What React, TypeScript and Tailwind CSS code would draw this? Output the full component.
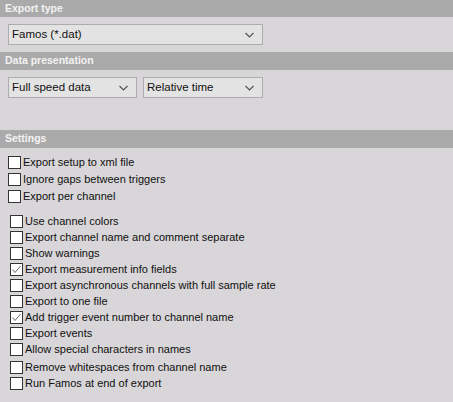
import React from "react";

const font = { fontFamily: '"Liberation Sans", Arial, sans-serif' };

function Header({ title, top }: { title: string; top?: boolean }) {
  return (
    <div
      className={`${top ? "h-[17px]" : "h-[18px]"} bg-[#aaaaaa] text-[#f2f2f2] font-bold text-[10.5px] pl-[5px] flex items-center`}
    >
      {title}
    </div>
  );
}

function Chevron() {
  return (
    <svg width="9" height="6" viewBox="0 0 9 6" className="shrink-0">
      <polyline points="0.5,1 4.5,5 8.5,1" fill="none" stroke="#505050" strokeWidth="1.1" />
    </svg>
  );
}

function Combo({ label, w }: { label: string; w: string }) {
  return (
    <div
      className={`${w} h-[21px] bg-[#e3e3e3] border border-[#adadad] flex items-center justify-between pl-[3px] pr-[8px] text-[11.5px] text-[#111]`}
    >
      <span>{label}</span>
      <Chevron />
    </div>
  );
}

function Check({ label, checked, h, extra }: { label: string; checked?: boolean; h: string; extra?: string }) {
  return (
    <div className={`${h} ${extra ?? ""} flex items-center gap-[2px] text-[11px] text-[#101010]`}>
      <div className="w-[13px] h-[13px] bg-white border border-[#333333] shrink-0 flex items-center justify-center">
        {checked && (
          <svg width="11" height="11" viewBox="0 0 11 11">
            <polyline points="1.5,5.5 4,8.5 9.5,2" fill="none" stroke="#6b6b6b" strokeWidth="1" />
          </svg>
        )}
      </div>
      <span className="leading-none">{label}</span>
    </div>
  );
}

export default function App() {
  const g2: [string, boolean?][] = [
    ["Use channel colors"],
    ["Export channel name and comment separate"],
    ["Show warnings"],
    ["Export measurement info fields", true],
    ["Export asynchronous channels with full sample rate"],
    ["Export to one file"],
    ["Add trigger event number to channel name", true],
    ["Export events"],
    ["Allow special characters in names"],
  ];
  return (
    <div className="w-[453px] h-[402px] bg-[#d8d6d8] overflow-hidden" style={font}>
      <Header title="Export type" top />
      <div className="pt-[7px] pb-[7px] pl-[8px]">
        <Combo label="Famos (*.dat)" w="w-[255px]" />
      </div>
      <Header title="Data presentation" />
      <div className="pt-[7px] pl-[8px] h-[60px] flex gap-[6px]">
        <Combo label="Full speed data" w="w-[129px]" />
        <Combo label="Relative time" w="w-[120px]" />
      </div>
      <Header title="Settings" />
      <div className="pt-[6px] pl-[8px]">
        <Check label="Export setup to xml file" h="h-[17px]" />
        <Check label="Ignore gaps between triggers" h="h-[17px]" />
        <Check label="Export per channel" h="h-[17px]" />
      </div>
      <div className="pt-[8px] pl-[10px]">
        {g2.map(([l, c]) => (
          <Check key={l} label={l} checked={c} h="h-[16px]" />
        ))}
        <Check label="Remove whitespaces from channel name" h="h-[16px]" extra="mt-[2px]" />
        <Check label="Run Famos at end of export" h="h-[16px]" />
      </div>
    </div>
  );
}
